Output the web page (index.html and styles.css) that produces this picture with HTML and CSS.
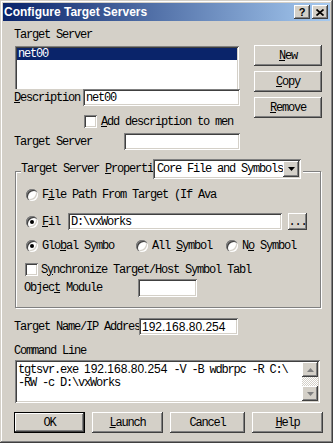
FILE: index.html
```html
<!DOCTYPE html>
<html lang="en">
<head>
<meta charset="utf-8"/>
<title>Configure Target Servers</title>
<link rel="stylesheet" href="styles.css">
</head>
<body>
<div class="window">
  <div class="titlebar">
    <span class="title">Configure Target Servers</span>
    <span class="caption-btns">
      <span class="cap-btn cap-help">?</span>
      <span class="cap-btn"><svg width="8" height="7" viewBox="0 0 8 7"><path d="M0.5 0.5 L7.5 6.5 M7.5 0.5 L0.5 6.5" stroke="#000" stroke-width="1.7"/></svg></span>
    </span>
  </div>

  <div class="dialog">
    <div class="top">
      <div class="top-left">
        <div class="label first-label">Target Server</div>
        <div class="listbox"><div class="item selected">net00</div></div>
        <div class="field-row desc-row">
          <span class="label desc-label"><u>D</u>escription</span>
          <div class="edit desc-edit">net00</div>
        </div>
        <div class="check-row add-row">
          <span class="check"></span>
          <span class="clip add-text"><u>A</u>dd description to men</span>
        </div>
        <div class="field-row ts-row">
          <span class="label ts-label">Target Server</span>
          <div class="edit ts-edit"></div>
        </div>
      </div>
      <div class="side-btns">
        <button class="btn"><u>N</u>ew</button>
        <button class="btn"><u>C</u>opy</button>
        <button class="btn"><u>R</u>emove</button>
      </div>
    </div>

    <div class="group">
      <div class="group-head">
        <span class="clip head-text">Target Server <u>P</u>roperti</span>
        <div class="combo">
          <span class="combo-text">Core File and Symbols</span>
          <span class="drop"><svg width="7" height="4" viewBox="0 0 7 4"><path d="M0 0 H7 L3.5 4 Z" fill="#000"/></svg></span>
        </div>
      </div>

      <div class="opt-row r1">
        <span class="radio"></span>
        <span class="clip path-text">F<u>i</u>le Path From Target (If Ava</span>
      </div>
      <div class="opt-row r2">
        <span class="radio on"></span>
        <span class="clip file-text"><u>F</u>il</span>
        <div class="edit file-edit">D:\vxWorks</div>
        <button class="btn dots">...</button>
      </div>
      <div class="opt-row r3">
        <span class="sym sym-global"><span class="radio on"></span><span class="clip">Glo<u>b</u>al Symbo</span></span>
        <span class="sym sym-all"><span class="radio"></span><span class="clip">All <u>S</u>ymbol</span></span>
        <span class="sym sym-none"><span class="radio"></span><span class="clip">N<u>o</u> Symbol</span></span>
      </div>
      <div class="opt-row r4">
        <span class="check"></span>
        <span class="clip sync-text">S<u>y</u>nchronize Target/Host Symbol Tabl</span>
      </div>
      <div class="opt-row r5">
        <span class="label obj-label">Objec<u>t</u> Module</span>
        <div class="edit obj-edit"></div>
      </div>
    </div>

    <div class="field-row ip-row">
      <span class="clip ip-label">Tar<u>g</u>et Name/IP Addres</span>
      <div class="edit ip-edit"><span class="num">192.168.80.254</span></div>
    </div>

    <div class="label cmd-label">Command Line</div>
    <div class="cmd">
      <div class="cmd-text">
        <div>tgtsvr.exe <span class="num">192.168.80.254</span> -V -B wdbrpc -R C:\</div>
        <div>-RW -c D:\vxWorks</div>
      </div>
      <div class="scroll">
        <span class="arrow"><svg width="7" height="4" viewBox="0 0 7 4"><path d="M3.5 0 L7 4 H0 Z" fill="#808080"/></svg></span>
        <span class="track"></span>
        <span class="arrow"><svg width="7" height="4" viewBox="0 0 7 4"><path d="M0 0 H7 L3.5 4 Z" fill="#808080"/></svg></span>
      </div>
    </div>

    <div class="actions">
      <button class="btn default">OK</button>
      <button class="btn"><u>L</u>aunch</button>
      <button class="btn wide">Cancel</button>
      <button class="btn"><u>H</u>elp</button>
    </div>
  </div>
</div>
</body>
</html>
```

FILE: styles.css
```css
body {
  margin: 0;
  background: #d4d0c8;
  font-family: "Liberation Mono", monospace;
  font-size: 12px;
  line-height: 12px;
  letter-spacing: -1.2px;
  color: #000;
}
.window {
  width: 333px;
  height: 443px;
  box-sizing: border-box;
  padding: 3px;
  background: #d4d0c8;
  box-shadow: inset -1px -1px #404040, inset 1px 1px #d4d0c8, inset -2px -2px #808080, inset 2px 2px #fff;
}
.titlebar {
  height: 18px;
  display: flex;
  align-items: center;
  justify-content: space-between;
  padding: 0 2px 0 1px;
  background: linear-gradient(to right, #0a246a, #a6caf0);
}
.title {
  font: bold 12px "Liberation Sans", sans-serif;
  letter-spacing: 0;
  color: #fff;
}
.caption-btns {
  display: flex;
  gap: 2px;
}
.cap-btn {
  width: 16px;
  height: 14px;
  display: flex;
  align-items: center;
  justify-content: center;
  background: #d4d0c8;
  box-shadow: inset -1px -1px #404040, inset 1px 1px #fff, inset -2px -2px #808080, inset 2px 2px #d4d0c8;
}
.cap-help {
  font: bold 11px "Liberation Sans", sans-serif;
  letter-spacing: 0;
}

/* shared controls */
.btn {
  border: none;
  padding: 0;
  margin: 0;
  font: inherit;
  letter-spacing: inherit;
  color: #000;
  height: 21px;
  background: #d4d0c8;
  box-shadow: inset -1px -1px #404040, inset 1px 1px #fff, inset -2px -2px #808080, inset 2px 2px #d4d0c8;
}
.edit, .listbox, .combo, .cmd {
  background: #fff;
  box-sizing: border-box;
  box-shadow: inset 1px 1px #808080, inset -1px -1px #fff, inset 2px 2px #404040, inset -2px -2px #d4d0c8;
}
.edit {
  height: 17px;
  padding: 0 3px;
  display: flex;
  align-items: center;
  white-space: nowrap;
}
.check {
  width: 13px;
  height: 13px;
  box-sizing: border-box;
  background: #fff;
  flex: none;
  box-shadow: inset 1px 1px #808080, inset -1px -1px #fff, inset 2px 2px #404040, inset -2px -2px #d4d0c8;
}
.radio {
  position: relative;
  width: 12px;
  height: 12px;
  flex: none;
  border-radius: 50%;
  background: #fff;
  box-shadow: inset 1px 1px #808080, inset 2px 2px #404040, inset -1px -1px #fff, inset -2px -2px #d4d0c8;
}
.radio.on::after {
  content: "";
  position: absolute;
  left: 4px;
  top: 4px;
  width: 4px;
  height: 4px;
  border-radius: 50%;
  background: #000;
}
.clip {
  display: block;
  flex: none;
  white-space: nowrap;
}
.label {
  white-space: nowrap;
}
.num {
  font-family: "Liberation Sans", sans-serif;
  letter-spacing: 0;
}

.dialog {
  padding: 0 7px 0 11px;
}

/* top part */
.top {
  display: flex;
}
.top-left {
  width: 226px;
}
.first-label {
  margin-top: 8px;
  height: 12px;
}
.listbox {
  margin: 5px 0 0 1px;
  width: 224px;
  height: 45px;
  padding: 2px;
}
.item {
  height: 12px;
  padding-left: 1px;
}
.item.selected {
  background: #0a246a;
  color: #fff;
}
.field-row {
  display: flex;
  align-items: center;
  height: 17px;
}
.desc-row {
  margin-top: -2px;
}
.desc-label {
  width: 69px;
  background: #d4d0c8;
  align-self: stretch;
  display: flex;
  align-items: center;
}
.desc-edit {
  width: 157px;
}
.check-row {
  display: flex;
  align-items: center;
  gap: 4px;
}
.add-row {
  margin: 9px 0 0 70px;
}
.add-text {
  width: 133px;
}
.ts-row {
  margin-top: 5px;
}
.ts-label {
  width: 110px;
}
.ts-edit {
  width: 116px;
}
.side-btns {
  margin: 24px 0 0 14px;
  display: flex;
  flex-direction: column;
  gap: 5px;
}
.side-btns .btn {
  width: 68px;
}

/* group box */
.group {
  margin: 21px 2px 0 1px;
  height: 137px;
  box-sizing: border-box;
  border: 1px solid #808080;
  box-shadow: inset 1px 1px #fff, 1px 1px #fff;
  padding-left: 10px;
}
.group-head {
  display: flex;
  width: fit-content;
  margin: -13px 0 0 -5px;
  padding-right: 2px;
  height: 20px;
  align-items: center;
  background: #d4d0c8;
}
.head-text {
  width: 132px;
}
.combo {
  width: 148px;
  height: 20px;
  display: flex;
  align-items: center;
  justify-content: space-between;
  padding: 2px;
}
.combo-text {
  padding-left: 2px;
  white-space: nowrap;
}
.drop {
  width: 16px;
  height: 16px;
  display: flex;
  align-items: center;
  justify-content: center;
  background: #d4d0c8;
  box-shadow: inset -1px -1px #404040, inset 1px 1px #fff, inset -2px -2px #808080, inset 2px 2px #d4d0c8;
}
.opt-row {
  display: flex;
  align-items: center;
}
.r1 {
  margin-top: 10px;
  gap: 4px;
}
.path-text {
  width: 178px;
}
.r2 {
  margin-top: 12px;
  height: 17px;
}
.file-text {
  width: 22px;
  margin-left: 4px;
}
.file-edit {
  width: 214px;
  margin-left: 4px;
}
.dots {
  width: 19px;
  height: 17px;
  margin-left: 6px;
}
.r3 {
  margin-top: 10px;
}
.sym {
  display: flex;
  align-items: center;
  gap: 4px;
}
.sym-global {
  width: 110px;
}
.sym-all {
  width: 90px;
}
.r4 {
  margin: 11px 0 0 -1px;
  gap: 3px;
}
.sync-text {
  width: 210px;
}
.r5 {
  margin: 3px 0 0 -2px;
}
.obj-label {
  width: 114px;
}
.obj-edit {
  width: 59px;
  height: 18px;
}

/* bottom part */
.ip-row {
  margin-top: 10px;
}
.ip-label {
  width: 125px;
}
.ip-edit {
  width: 99px;
  flex: none;
}
.cmd-label {
  margin-top: 10px;
  height: 12px;
}
.cmd {
  margin: 3px 0 0 1px;
  width: 305px;
  height: 43px;
  padding: 2px;
  display: flex;
  justify-content: space-between;
}
.cmd-text {
  white-space: nowrap;
  line-height: 13px;
  padding: 1px 0 0 1px;
}
.scroll {
  width: 16px;
  display: flex;
  flex-direction: column;
}
.arrow {
  height: 15px;
  flex: none;
  display: flex;
  align-items: center;
  justify-content: center;
  background: #d4d0c8;
  box-shadow: inset -1px -1px #404040, inset 1px 1px #fff, inset -2px -2px #808080, inset 2px 2px #d4d0c8;
}
.track {
  flex: 1;
  background: repeating-conic-gradient(#fff 0 25%, #d4d0c8 0 50%) 0 0 / 2px 2px;
}
.actions {
  margin-top: 9px;
  display: flex;
  gap: 7px;
}
.actions .btn {
  width: 71px;
}
.actions .btn.wide {
  width: 75px;
}
.btn.default {
  box-shadow: inset 0 0 0 1px #000, inset -2px -2px #404040, inset 2px 2px #fff, inset -3px -3px #808080;
}
```
